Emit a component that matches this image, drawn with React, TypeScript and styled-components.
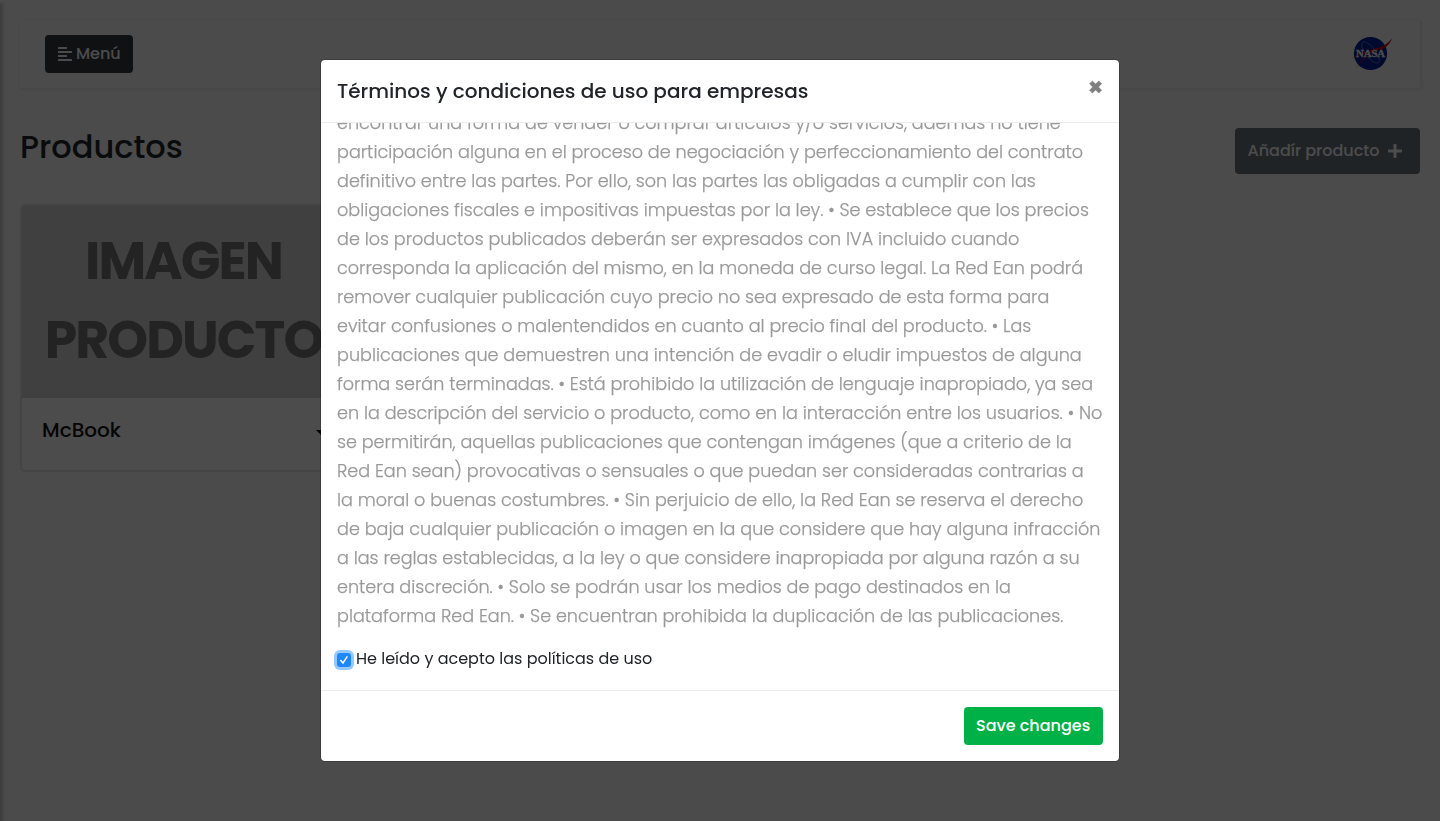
import React from "react";
import styled, { createGlobalStyle } from "styled-components";
import { FaAlignLeft, FaPlus } from "react-icons/fa";

const GlobalStyle = createGlobalStyle`
  *, *::before, *::after { box-sizing: border-box; }
  html, body, #root { height: 100%; }
  body {
    margin: 0;
    overflow: hidden;
    background: #fafafa;
    color: #212529;
    font-family: Poppins, Inter, "Open Sans", sans-serif;
    font-size: 16px;
    line-height: 24px;
  }
  button { font-family: inherit; }
`;

const Sidebar = styled.aside`
  position: fixed;
  top: 0;
  left: -250px;
  width: 250px;
  height: 100vh;
  box-shadow: 3px 3px 3px rgba(0, 0, 0, 0.2);
`;

const Content = styled.main`
  min-height: 100vh;
  padding: 20px;
`;

const Navbar = styled.nav`
  display: flex;
  align-items: center;
  justify-content: space-between;
  height: 68px;
  margin-bottom: 40px;
  padding: 15px 28px 15px 25px;
  background: #fafafa;
  box-shadow: 1px 1px 3px rgba(0, 0, 0, 0.1);
`;

const Button = styled.button<{ $bg: string; $tall?: boolean }>`
  display: inline-flex;
  align-items: center;
  height: ${(p) => (p.$tall ? 46 : 38)}px;
  padding: 0 12px;
  border: 0;
  border-radius: 4px;
  background: ${(p) => p.$bg};
  color: #fff;
  font-size: 16px;
  font-weight: 500;
  line-height: 24px;
  white-space: nowrap;

  svg { margin-bottom: 1px; }
`;

const MenuButton = styled(Button)`
  width: 88px;
  gap: 3px;
`;

const AddButton = styled(Button)`
  width: 185px;
  padding-left: 12.5px;
  gap: 7.5px;
`;

const PageHead = styled.header`
  display: flex;
  align-items: flex-start;
  justify-content: space-between;
  height: 76px;
`;

const PageTitle = styled.h2`
  margin: 0;
  font-size: 32px;
  font-weight: 500;
  line-height: 38px;
`;

const Card = styled.article`
  width: 328px;
  height: 268px;
  border: 2px solid #e4e4e4;
  border-radius: 5px;
  overflow: hidden;
  background: #fff;
`;

const Placeholder = styled.div`
  display: flex;
  flex-direction: column;
  align-items: center;
  height: 192px;
  padding-top: 15px;
  background: #d6d6d6;
  color: #757575;
  font-size: 52px;
  font-weight: 700;
  line-height: 79px;
  letter-spacing: -1.9px;
  text-indent: -1px;
`;

const CardBody = styled.div`
  display: flex;
  align-items: center;
  justify-content: space-between;
  padding: 20px 20px 0;
  color: #111;
  font-size: 20px;
  font-weight: 500;
`;

const Caret = styled.i`
  margin-top: 4px;
  border: 5px solid transparent;
  border-top-color: #000;
  border-bottom: 0;
`;

const Backdrop = styled.div`
  position: fixed;
  inset: 0;
  display: flex;
  justify-content: center;
  align-items: flex-start;
  padding-top: 59px;
  background: rgba(0, 0, 0, 0.7);
`;

const Dialog = styled.section`
  display: flex;
  flex-direction: column;
  width: 800px;
  height: 703px;
  border: 1px solid rgba(0, 0, 0, 0.2);
  border-radius: 5px;
  background: #fff;
  background-clip: padding-box;
`;

const DialogHead = styled.header`
  display: flex;
  justify-content: space-between;
  height: 63px;
  padding: 16px;
  border-bottom: 1px solid #e9ecef;
`;

const DialogTitle = styled.h5`
  margin: 0;
  font-size: 20px;
  font-weight: 500;
  line-height: 30px;
`;

const CloseButton = styled.button`
  display: flex;
  width: 14px;
  height: 14px;
  margin-top: 4px;
  padding: 0;
  border: 0;
  background: none;
`;

const DialogBody = styled.div`
  display: flex;
  flex-direction: column;
  justify-content: flex-end;
  height: 567px;
  padding: 0 16px 19px;
  overflow: hidden;
`;

const Terms = styled.p`
  flex: none;
  margin: 0 0 16px;
  color: #999;
  font-size: 17.6px;
  font-weight: 300;
  line-height: 29px;
  -webkit-text-stroke: 0.25px #999;
`;

const Line = styled.span`
  display: block;
  white-space: nowrap;
`;

const Accept = styled.label`
  display: flex;
  align-items: center;
  flex: none;
  gap: 5px;
  height: 24px;
`;

const CheckBox = styled.span`
  display: flex;
  align-items: center;
  justify-content: center;
  width: 14px;
  height: 14px;
  margin-top: 2px;
  border-radius: 3px;
  background: #1e88fb;
  box-shadow: 0 0 0 3px #96c8fc;
`;

const DialogFoot = styled.footer`
  display: flex;
  justify-content: flex-end;
  padding: 16px;
  border-top: 1px solid #e9ecef;
`;

const SaveButton = styled(Button)`
  width: 139px;
`;

const terms = [
  "encontrar una forma de vender o comprar artículos y/o servicios, además no tiene",
  "participación alguna en el proceso de negociación y perfeccionamiento del contrato",
  "definitivo entre las partes. Por ello, son las partes las obligadas a cumplir con las",
  "obligaciones fiscales e impositivas impuestas por la ley. • Se establece que los precios",
  "de los productos publicados deberán ser expresados con IVA incluido cuando",
  "corresponda la aplicación del mismo, en la moneda de curso legal. La Red Ean podrá",
  "remover cualquier publicación cuyo precio no sea expresado de esta forma para",
  "evitar confusiones o malentendidos en cuanto al precio final del producto. • Las",
  "publicaciones que demuestren una intención de evadir o eludir impuestos de alguna",
  "forma serán terminadas. • Está prohibido la utilización de lenguaje inapropiado, ya sea",
  "en la descripción del servicio o producto, como en la interacción entre los usuarios. • No",
  "se permitirán, aquellas publicaciones que contengan imágenes (que a criterio de la",
  "Red Ean sean) provocativas o sensuales o que puedan ser consideradas contrarias a",
  "la moral o buenas costumbres. • Sin perjuicio de ello, la Red Ean se reserva el derecho",
  "de baja cualquier publicación o imagen en la que considere que hay alguna infracción",
  "a las reglas establecidas, a la ley o que considere inapropiada por alguna razón a su",
  "entera discreción. • Solo se podrán usar los medios de pago destinados en la",
  "plataforma Red Ean. • Se encuentran prohibida la duplicación de las publicaciones.",
];

function NasaLogo() {
  return (
    <svg width="40" height="38" viewBox="0 0 40 38" aria-label="NASA">
      <circle cx="18.5" cy="18.5" r="16.6" fill="#06249a" />
      <ellipse cx="18.5" cy="17.5" rx="5" ry="13" fill="none" stroke="#8fa3d2" strokeWidth=".5" transform="rotate(-38 18.5 17.5)" />
      <path d="M0 23.5C5 20 15 16 27 12.5C34 10.5 37 7 40 3.5C38 9 34 13 28 14.5C19 16.5 12 22 4 33.5C10 23 15 19 21 16.4C13 18.3 6 21 0 23.5Z" fill="#d00812" />
      <text x="4" y="22.2" textLength="29" lengthAdjust="spacingAndGlyphs" fill="#fff" stroke="#fff" strokeWidth=".3" fontFamily="Liberation Serif, serif" fontWeight="700" fontSize="10">NASA</text>
    </svg>
  );
}

export default function App() {
  return (
    <>
      <GlobalStyle />
      <Content>
        <Navbar>
          <MenuButton $bg="#343a40">
            <FaAlignLeft size={16} />
            <span>Menú</span>
          </MenuButton>
          <NasaLogo />
        </Navbar>
        <PageHead>
          <PageTitle>Productos</PageTitle>
          <AddButton $bg="#6c757d" $tall>
            <span>Añadír producto</span>
            <FaPlus size={16} />
          </AddButton>
        </PageHead>
        <Card>
          <Placeholder>
            <span>IMAGEN</span>
            <span>PRODUCTO</span>
          </Placeholder>
          <CardBody>
            <span>McBook</span>
            <Caret />
          </CardBody>
        </Card>
      </Content>
      <Sidebar />
      <Backdrop>
        <Dialog role="dialog">
          <DialogHead>
            <DialogTitle>Términos y condiciones de uso para empresas</DialogTitle>
            <CloseButton aria-label="Cerrar">
              <svg width="14" height="14" viewBox="0 0 14 14" fill="#7f7f7f" stroke="#7f7f7f" strokeWidth=".6" strokeLinejoin="round">
                <path d="M3.2.9L6.6 4L10 .9L11 2.4L12.7 3.6L9.5 7L12.7 10.4L11 11.6L10 13.1L6.6 10L3.2 13.1L2.2 11.6L.5 10.4L3.7 7L.5 3.6L2.2 2.4Z" />
              </svg>
            </CloseButton>
          </DialogHead>
          <DialogBody>
            <Terms>
              {terms.map((text) => (
                <Line key={text}>{text}</Line>
              ))}
            </Terms>
            <Accept>
              <CheckBox>
                <svg width="10" height="10" viewBox="0 0 10 10" fill="none" stroke="#fff" strokeWidth="1.5" strokeLinecap="round">
                  <path d="M1.8 5.5L4 8L8 1.8" />
                </svg>
              </CheckBox>
              <span>He leído y acepto las políticas de uso</span>
            </Accept>
          </DialogBody>
          <DialogFoot>
            <SaveButton $bg="#00b147">Save changes</SaveButton>
          </DialogFoot>
        </Dialog>
      </Backdrop>
    </>
  );
}
